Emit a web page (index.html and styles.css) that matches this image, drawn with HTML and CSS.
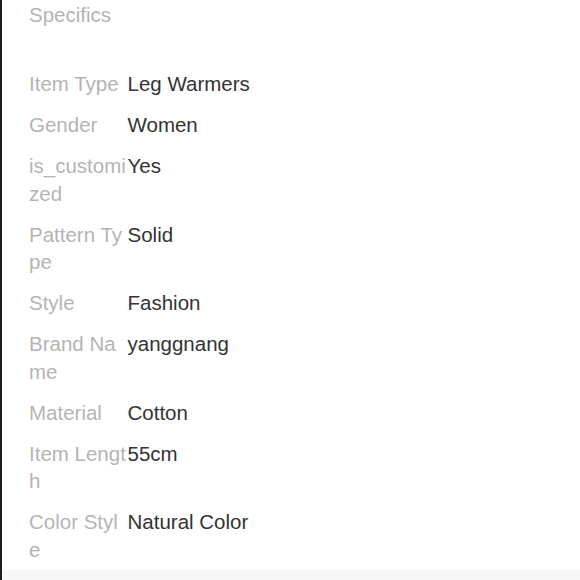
FILE: index.html
```html
<!DOCTYPE html>
<html>
<head>
<meta charset="utf-8">
<link rel="stylesheet" href="styles.css">
</head>
<body>
<div class="page">
  <div class="panel">
    <div class="heading">Specifics</div>
    <div class="specs">
      <div class="row"><div class="label">Item Type</div><div class="value">Leg Warmers</div></div>
      <div class="row"><div class="label">Gender</div><div class="value">Women</div></div>
      <div class="row"><div class="label">is_customized</div><div class="value">Yes</div></div>
      <div class="row"><div class="label">Pattern Type</div><div class="value">Solid</div></div>
      <div class="row"><div class="label">Style</div><div class="value">Fashion</div></div>
      <div class="row"><div class="label">Brand Name</div><div class="value">yanggnang</div></div>
      <div class="row"><div class="label">Material</div><div class="value">Cotton</div></div>
      <div class="row"><div class="label">Item Length</div><div class="value">55cm</div></div>
      <div class="row"><div class="label">Color Style</div><div class="value">Natural Color</div></div>
    </div>
  </div>
  <div class="footer"></div>
</div>
</body>
</html>
```
FILE: styles.css
```css
html, body {
  margin: 0;
  padding: 0;
  background: #ffffff;
}
body {
  font-family: "Liberation Sans", Arial, sans-serif;
  font-size: 20.5px;
  line-height: 27.5px;
}
.page {
  width: 580px;
  height: 580px;
  display: flex;
  flex-direction: column;
  border-left: 2px solid #1e1e1e;
  box-sizing: border-box;
  overflow: hidden;
}
.panel {
  height: 570px;
  padding-left: 27px;
  padding-top: 1px;
  box-sizing: border-box;
}
.heading {
  color: #b4b4b4;
}
.specs {
  padding-top: 41.5px;
  display: flex;
  flex-direction: column;
  gap: 13.5px;
}
.row {
  display: flex;
}
.label {
  width: 98.5px;
  flex: none;
  color: #b4b4b4;
  word-break: break-all;
}
.value {
  color: #333333;
}
.footer {
  flex: 1;
  background: #f8f7f7;
}
```
